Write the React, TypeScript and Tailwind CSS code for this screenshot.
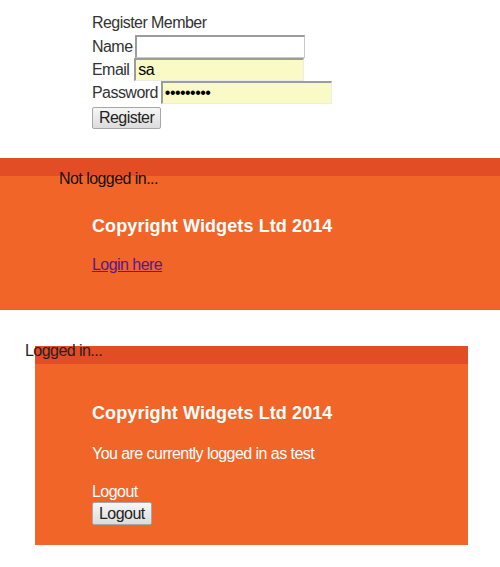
// App.tsx

const inputBase =
  'h-[23px] w-[170px] px-[2px] text-[16px] leading-[18px] text-black outline-none border border-t-2 border-l-2 border-t-[#9c9c9c] border-l-[#9c9c9c]';

const RegisterForm = () => {
  return (
    <div className="pl-[92px] pt-[14px] text-[#333]">
      <div className="leading-[18px]">Register Member</div>
      <div className="mt-[3px] flex flex-col">
        <label className="flex h-[23px] items-center gap-[3px]">
          <span>Name</span>
          <input type="text" className={`${inputBase} bg-white border-r-[#c8c8c8] border-b-[#c8c8c8]`} />
        </label>
        <label className="flex h-[23px] items-center gap-[5px]">
          <span>Email</span>
          <input type="text" defaultValue="sa" className={`${inputBase} w-[168px] bg-[#fafac6] border-r-[#ececec] border-b-[#ececec]`} />
        </label>
        <label className="flex h-[23px] items-center gap-[3px]">
          <span>Password</span>
          <input
            type="password"
            defaultValue="123456789"
            className={`${inputBase} w-[171px] bg-[#fafac6] border-r-[#ececec] border-b-[#ececec]`}
          />
        </label>
      </div>
      <button className="mt-[3px] h-[22px] rounded-[2px] border border-[#a7a7a7] bg-gradient-to-b from-[#f6f6f6] to-[#dcdcdc] px-[6px] leading-[18px] text-[#222]">
        Register
      </button>
    </div>
  );
};

const App = () => {
  return (
    <div className="min-h-[567px] bg-white font-['Liberation_Sans',Arial,sans-serif] text-[16px] tracking-[-0.55px]">
      <RegisterForm />

      {/* Not logged in footer */}
      <div className="mt-[28px] h-[152px] w-full bg-[#f16529]">
        <div className="h-[18px] bg-[#e34d26]" />
        <div className="-mt-[6px] h-[18px] pl-[59px] leading-[18px] text-[#111]">Not logged in...</div>
        <div className="pl-[92px]">
          <h2 className="mt-[28px] text-[18px] font-bold leading-[21px] tracking-[0.1px] text-white">Copyright Widgets Ltd 2014</h2>
          <a href="#" className="mt-[19px] inline-block leading-[18px] text-[#551a8b] underline">
            Login here
          </a>
        </div>
      </div>

      {/* Logged in footer */}
      <div className="relative z-10 mt-[32px] h-[18px] pl-[25px] leading-[18px] text-[#222]">Logged in...</div>
      <div className="-mt-[14px] ml-[35px] w-[433px] bg-[#f16529] pb-[19px]">
        <div className="h-[18px] bg-[#e34d26]" />
        <div className="pl-[57px] text-white">
          <h2 className="mt-[39px] text-[18px] font-bold leading-[21px] tracking-[0.1px]">Copyright Widgets Ltd 2014</h2>
          <p className="mt-[21px] leading-[18px]">You are currently logged in as test</p>
          <div className="mt-[20px] leading-[18px]">Logout</div>
          <button className="mt-[1px] h-[23px] rounded-[2px] border border-[#a7a7a7] bg-gradient-to-b from-[#f6f6f6] to-[#dcdcdc] px-[6px] leading-[18px] text-[#222]">
            Logout
          </button>
        </div>
      </div>
    </div>
  );
};

export default App;
